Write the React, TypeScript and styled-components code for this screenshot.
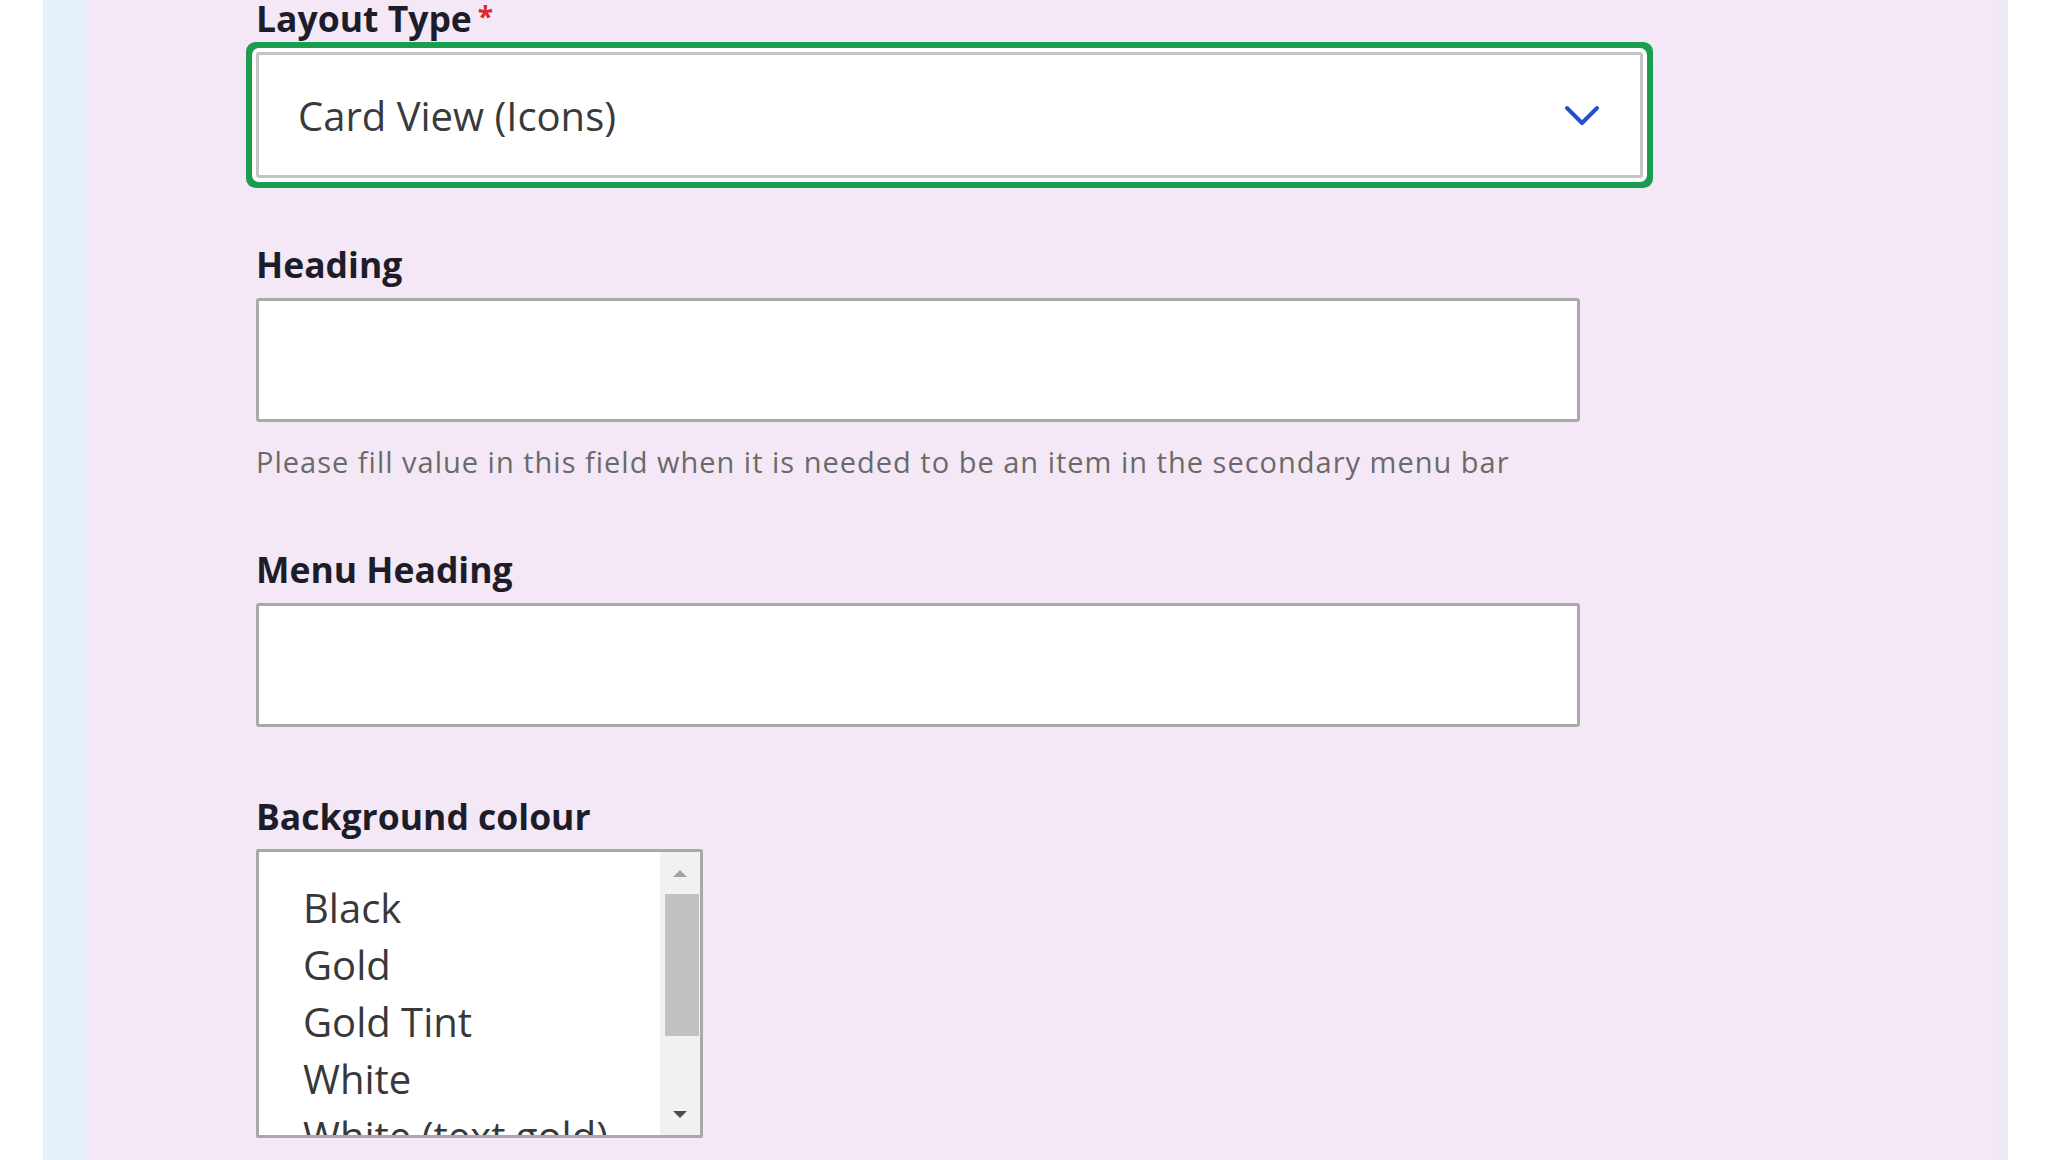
import styled, { createGlobalStyle } from "styled-components";

const GlobalStyle = createGlobalStyle`
  html, body {
    margin: 0;
    padding: 0;
    background: #ffffff;
    font-family: "Open Sans", "Noto Sans", sans-serif;
  }
`;

const Page = styled.div`
  display: grid;
  grid-template-columns: 43px 45px 1fr 10px 40px;
  width: 2048px;
  height: 1160px;
  overflow: hidden;
`;

const Strip = styled.div<{ $color: string }>`
  background: ${(p) => p.$color};
`;

const Panel = styled.main`
  background: #f4e8f6;
  padding: 0 0 0 168px;
`;

const Form = styled.form`
  display: flex;
  flex-direction: column;
`;

const Field = styled.div<{ $space?: number }>`
  display: flex;
  flex-direction: column;
  align-items: flex-start;
  margin-top: ${(p) => p.$space ?? 0}px;
`;

const Label = styled.label`
  font-size: 35.5px;
  line-height: 36px;
  font-weight: 700;
  color: #1d1d29;
  display: flex;
  align-items: flex-start;
`;

const Required = styled.span`
  color: #e0242b;
  font-size: 28px;
  line-height: 28px;
  margin-left: 6px;
  margin-top: 2px;
`;

const SelectBox = styled.div`
  margin-top: 16px;
  width: 1387px;
  height: 126px;
  box-sizing: border-box;
  border: 3px solid #c4c4c6;
  border-radius: 3px;
  background: #ffffff;
  box-shadow: 0 0 0 4px #ffffff, 0 0 0 10px #1c9c4e;
  display: flex;
  align-items: center;
  justify-content: space-between;
  padding: 0 40px 0 39px;
`;

const SelectValue = styled.span`
  font-size: 40px;
  color: #3a3a3c;
`;

const TextInput = styled.input`
  margin-top: 16px;
  width: 1324px;
  height: 124px;
  box-sizing: border-box;
  border: 3px solid #a9a9ab;
  border-radius: 3px;
  background: #ffffff;
  outline: none;
`;

const Help = styled.div`
  margin-top: 22px;
  font-size: 29px;
  line-height: 36px;
  letter-spacing: 1px;
  color: #6a6a6a;
`;

const ListBox = styled.div`
  margin-top: 15px;
  width: 447px;
  height: 289px;
  box-sizing: border-box;
  border: 3px solid #a9a9ab;
  border-radius: 2px;
  background: #ffffff;
  display: flex;
  overflow: hidden;
`;

const Options = styled.ul`
  flex: 1;
  margin: 0;
  padding: 27px 0 0 44px;
  list-style: none;
  overflow: hidden;
`;

const Option = styled.li`
  font-size: 40px;
  line-height: 57px;
  color: #38383a;
  white-space: nowrap;
`;

const Scrollbar = styled.div`
  width: 40px;
  background: #f1f1f1;
  display: flex;
  flex-direction: column;
  align-items: stretch;
`;

const ArrowCell = styled.div<{ $grow?: boolean }>`
  height: 42px;
  display: flex;
  align-items: center;
  justify-content: center;
  margin-top: ${(p) => (p.$grow ? "auto" : "0")};
`;

const Arrow = styled.div<{ $down?: boolean }>`
  width: 0;
  height: 0;
  border-left: 7px solid transparent;
  border-right: 7px solid transparent;
  ${(p) =>
    p.$down
      ? "border-top: 7px solid #4d4d4d;"
      : "border-bottom: 7px solid #a3a3a3;"}
`;

const Thumb = styled.div`
  height: 142px;
  margin: 0 1px 0 5px;
  background: #c1c1c1;
`;

const Chevron = () => (
  <svg width="36" height="22" viewBox="0 0 36 22" fill="none">
    <polyline
      points="3,4 18,19 33,4"
      stroke="#2350d2"
      strokeWidth="4"
      strokeLinecap="round"
      strokeLinejoin="round"
    />
  </svg>
);

const colours = [
  "Black",
  "Gold",
  "Gold Tint",
  "White",
  "White (text gold)",
  "Grey",
];

const App = () => {
  return (
    <>
      <GlobalStyle />
      <Page>
        <Strip $color="#ffffff" />
        <Strip $color="#e5f1fb" />
        <Panel>
          <Form>
            <Field>
              <Label>
                Layout Type<Required>*</Required>
              </Label>
              <SelectBox>
                <SelectValue>Card View (Icons)</SelectValue>
                <Chevron />
              </SelectBox>
            </Field>
            <Field $space={68}>
              <Label>Heading</Label>
              <TextInput type="text" />
              <Help>
                Please fill value in this field when it is needed to be an item
                in the secondary menu bar
              </Help>
            </Field>
            <Field $space={71}>
              <Label>Menu Heading</Label>
              <TextInput type="text" />
            </Field>
            <Field $space={71}>
              <Label>Background colour</Label>
              <ListBox>
                <Options>
                  {colours.map((c) => (
                    <Option key={c}>{c}</Option>
                  ))}
                </Options>
                <Scrollbar>
                  <ArrowCell>
                    <Arrow />
                  </ArrowCell>
                  <Thumb />
                  <ArrowCell $grow>
                    <Arrow $down />
                  </ArrowCell>
                </Scrollbar>
              </ListBox>
            </Field>
          </Form>
        </Panel>
        <Strip $color="#e9ecf6" />
        <Strip $color="#ffffff" />
      </Page>
    </>
  );
};

export default App;
